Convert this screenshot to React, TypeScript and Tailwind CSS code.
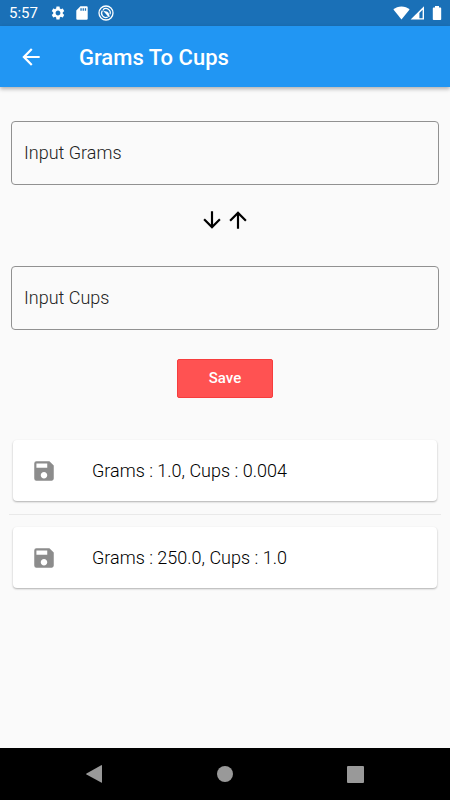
import { useState } from 'react'
import {
  MdArrowBack,
  MdArrowDownward,
  MdArrowUpward,
  MdSave,
  MdSettings,
} from 'react-icons/md'

const GRAMS_PER_CUP = 250

const StatusBar = () => (
  <div className="flex h-[26px] items-center justify-between bg-[#1a70b7] pl-[9px] pr-2 text-white">
    <div className="flex items-center">
      <span className="text-[15px] leading-none">5:57</span>
      <MdSettings className="ml-3 size-4" />
      <svg viewBox="0 0 12 14" className="ml-[10px] h-[14px] w-3" fill="currentColor">
        <path
          fillRule="evenodd"
          d="M4.4 0.2H10.6q1.1 0 1.1 1.1V12.7q0 1.1-1.1 1.1H1.4q-1.1 0-1.1-1.1V4.4ZM4.4 2.2V4.8H5.7V2.2ZM6.6 2.2V4.8H7.9V2.2ZM8.8 2.2V4.8H10.1V2.2Z"
        />
      </svg>
      <svg viewBox="0 0 16 16" className="ml-[10px] size-4" fill="none" stroke="currentColor">
        <circle cx="8" cy="8" r="7" strokeWidth="1.3" />
        <path d="M5 4.8A4.3 4.3 0 0 1 12 9.4" strokeWidth="1.2" />
        <path d="M4.4 5.6A4.3 4.3 0 0 0 9.8 12" strokeWidth="1.2" />
        <path d="M4.2 4.8 6.8 6.2Q9.6 5.8 10.6 8L11.8 11.6 10.8 12.2Z" fill="currentColor" stroke="none" />
      </svg>
    </div>
    <div className="flex items-center">
      <svg viewBox="0 0 17 14" className="h-[14px] w-[17px]" fill="currentColor">
        <path d="M8.5 13.4 0.4 3.4C2.5 1.6 5.4 0.4 8.5 0.4s6 1.2 8.1 3Z" />
      </svg>
      <svg viewBox="0 0 15 14" className="h-[14px] w-[15px]">
        <path d="M14 0.2V13.6H0.6Z" fill="currentColor" />
        <path d="M12.6 3.8V12.2H9.4V7Z" fill="#1a70b7" />
      </svg>
      <svg viewBox="0 0 10 14" className="ml-[7px] h-[14px] w-[10px]" fill="currentColor">
        <path d="M3 0h4v1.6h1.4q.8 0 .8.8V13.2q0 .8-.8.8H1.6q-.8 0-.8-.8V2.4q0-.8.8-.8H3Z" />
      </svg>
    </div>
  </div>
)

type FieldProps = {
  label: string
  value: string
  onChange: (value: string) => void
}

const Field = ({ label, value, onChange }: FieldProps) => (
  <input
    type="text"
    inputMode="decimal"
    aria-label={label}
    placeholder={label}
    value={value}
    onChange={(e) => onChange(e.target.value)}
    className="h-16 w-full rounded border border-[#919191] bg-transparent px-3 pb-0.5 text-lg font-light text-black outline-none placeholder:text-[#222222] focus:border-[#2196f3]"
  />
)

const NavigationBar = () => (
  <nav className="grid h-[52px] grid-cols-3 place-items-center bg-black px-[30px] text-[#999999]">
    <button type="button" aria-label="Back">
      <svg viewBox="0 0 18 18" className="size-[18px]" fill="currentColor">
        <path d="M0.5 8.4 15.2 0.2q.8-.3.8.5V17.2q0 .8-.8.4L0.5 9.5q-.7-.5 0-1.1Z" />
      </svg>
    </button>
    <button type="button" aria-label="Home" className="size-4 rounded-full bg-[#999999]" />
    <button type="button" aria-label="Recent apps" className="size-[17px] rounded-[1px] bg-[#999999]" />
  </nav>
)

const App = () => {
  const [grams, setGrams] = useState('')
  const [cups, setCups] = useState('')
  const [saved, setSaved] = useState([
    { grams: '1.0', cups: '0.004' },
    { grams: '250.0', cups: '1.0' },
  ])

  const handleGrams = (value: string) => {
    setGrams(value)
    setCups(value ? String(Number(value) / GRAMS_PER_CUP) : '')
  }

  const handleCups = (value: string) => {
    setCups(value)
    setGrams(value ? String(Number(value) * GRAMS_PER_CUP) : '')
  }

  const handleSave = () => {
    if (grams && cups) setSaved([...saved, { grams, cups }])
  }

  return (
    <div className="flex min-h-screen flex-col bg-[#fafafa] font-['Roboto',sans-serif]">
      <StatusBar />
      <header className="flex h-[61px] items-center gap-[35px] bg-[#2196f3] px-[18px] pt-px text-white shadow-[0_2px_4px_rgba(0,0,0,0.3)]">
        <button type="button" aria-label="Back">
          <MdArrowBack className="size-[26px]" />
        </button>
        <h1 className="text-[22px] font-medium">Grams To Cups</h1>
      </header>

      <main className="flex flex-1 flex-col px-[11px] pt-[34px]">
        <Field label="Input Grams" value={grams} onChange={handleGrams} />
        <div className="flex h-[81px] items-center justify-center pb-3 text-black">
          <MdArrowDownward className="size-[26px]" />
          <MdArrowUpward className="size-[26px]" />
        </div>
        <Field label="Input Cups" value={cups} onChange={handleCups} />

        <button
          type="button"
          onClick={handleSave}
          className="mt-[29px] h-[39px] w-24 self-center rounded-[2px] border border-[#f63d3d] bg-[#ff5252] text-[15px] font-medium text-white"
        >
          Save
        </button>

        <ul className="-mx-0.5 mt-[42px] divide-y divide-[#e9e9e9]">
          {saved.map((item, index) => (
            <li key={index} className="px-1 pb-[13px] not-first:pt-3">
              <div className="flex h-[61px] items-center gap-[35px] rounded bg-white px-[18px] shadow-[0_1px_2px_rgba(0,0,0,0.3)]">
                <MdSave className="size-[26px] text-[#8c8c8c]" />
                <span className="text-lg font-light text-black">
                  Grams : {item.grams}, Cups : {item.cups}
                </span>
              </div>
            </li>
          ))}
        </ul>
      </main>

      <NavigationBar />
    </div>
  )
}

export default App
